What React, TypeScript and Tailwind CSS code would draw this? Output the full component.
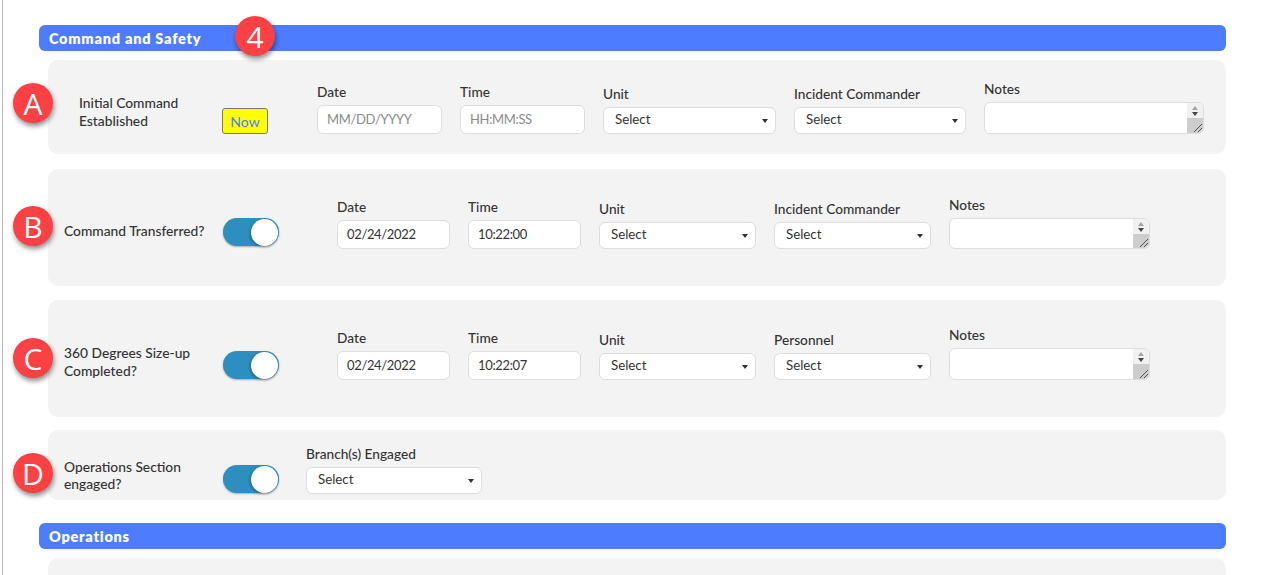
const Badge = ({ text, className }: { text: string; className: string }) => (
  <div
    className={`absolute w-10 h-10 rounded-full bg-[#fb4144] text-white flex items-center justify-center text-[30px] font-['Open_Sans',sans-serif] shadow-[1px_3px_5px_rgba(0,0,0,0.45)] ${className}`}
  >
    {text}
  </div>
);

const SectionHeader = ({ title }: { title: string }) => (
  <div className="h-[26px] rounded-md bg-[#4d7cff] pl-[10px] pt-px flex items-center text-white text-[14.5px] font-extrabold tracking-[0.75px] font-['Lato',sans-serif]">
    {title}
  </div>
);

const Field = ({
  label,
  className,
  gap,
  children,
}: {
  label: string;
  className: string;
  gap: string;
  children: React.ReactNode;
}) => (
  <div className={`shrink-0 ${className}`}>
    <div className={`h-[18px] leading-[18px] text-[13.7px] font-medium text-[#333] ${gap}`}>{label}</div>
    {children}
  </div>
);

const TextBox = ({ value, placeholder, h }: { value?: string; placeholder?: string; h: string }) => (
  <div
    className={`${h} bg-white border border-[#ddd] rounded-md pl-[9px] flex items-center text-[13px] tracking-[-0.35px] ${
      placeholder ? "text-[#8a8a8a]" : "text-[#333]"
    }`}
  >
    {value ?? placeholder}
  </div>
);

const SelectBox = () => (
  <div className="h-[27px] bg-white border border-[#ddd] rounded-md pl-[11px] pr-[7px] flex items-center justify-between text-[13.3px] text-[#333]">
    <span className="-mt-[2px]">Select</span>
    <span className="w-0 h-0 border-x-[3.5px] border-x-transparent border-t-[4px] border-t-[#333]" />
  </div>
);

const NotesBox = ({ h }: { h: string }) => (
  <div className={`${h} bg-white border border-[#ddd] rounded-md flex justify-end overflow-hidden`}>
    <div className="w-[16px] flex flex-col">
      <div className="h-[15px] bg-[#f1f1f1] flex flex-col items-center justify-center gap-[2px]">
        <span className="w-0 h-0 border-x-[3.5px] border-x-transparent border-b-[4px] border-b-[#a3a3a3]" />
        <span className="w-0 h-0 border-x-[3.5px] border-x-transparent border-t-[4px] border-t-[#444]" />
      </div>
      <div className="flex-1 bg-[#cdcdcd] flex items-end justify-end">
        <svg width="12" height="12" viewBox="0 0 12 12" stroke="#555" strokeWidth="1">
          <path d="M3 11 L11 3 M7 11 L11 7" />
        </svg>
      </div>
    </div>
  </div>
);

const Toggle = ({ className }: { className: string }) => (
  <div
    className={`shrink-0 w-14 h-[28px] rounded-full bg-[#2d8fc0] flex items-center justify-end pr-px shadow-[0_1px_2px_rgba(0,0,0,0.3)] ${className}`}
  >
    <div className="w-[27px] h-[27px] rounded-full bg-white shadow-[-1px_1px_3px_rgba(0,0,0,0.3)]" />
  </div>
);

const FieldRow = ({
  top,
  person,
  date,
  time,
  notesGap,
  notesH,
}: {
  top: string;
  person: string;
  date: string;
  time: string;
  notesGap: string;
  notesH: string;
}) => (
  <>
    <Field label="Date" className={`w-[113px] ml-[58px] ${top}`} gap="mb-[4px]">
      <TextBox value={date} h="h-[29px]" />
    </Field>
    <Field label="Time" className={`w-[113px] ml-[18px] ${top}`} gap="mb-[4px]">
      <TextBox value={time} h="h-[29px]" />
    </Field>
    <Field label="Unit" className={`w-[157px] ml-[18px] ${top}`} gap="mt-[2px] mb-[4px]">
      <SelectBox />
    </Field>
    <Field label={person} className={`w-[157px] ml-[18px] ${top}`} gap="mt-[2px] mb-[4px]">
      <SelectBox />
    </Field>
    <Field label="Notes" className={`w-[201px] ml-[18px] ${top}`} gap={notesGap}>
      <NotesBox h={notesH} />
    </Field>
  </>
);

export default function App() {
  return (
    <div className="relative h-[575px] overflow-hidden bg-white font-['Lato',sans-serif]">
      <div className="ml-[2px] h-full border-l border-[#bdbdbd] pl-[36px] pr-[35px] pt-[25px]">
        <SectionHeader title="Command and Safety" />

        <div className="ml-[9px] mt-[9px] h-[94px] bg-[#f3f3f3] rounded-[10px] flex items-start">
          <div className="w-[143px] ml-[31px] mt-[34px] text-[13.8px] leading-[18px] font-medium text-[#333] shrink-0">
            Initial Command
            <br />
            Established
          </div>
          <div className="shrink-0 w-[46px] h-[26px] mt-[48px] bg-[#ffff00] border border-[#777] rounded-[3px] flex items-center justify-center text-[14px] text-[#4d7cff]">
            Now
          </div>
          <Field label="Date" className="w-[125px] ml-[49px] mt-[23px]" gap="mb-[4px]">
            <TextBox placeholder="MM/DD/YYYY" h="h-[29px]" />
          </Field>
          <Field label="Time" className="w-[125px] ml-[18px] mt-[23px]" gap="mb-[4px]">
            <TextBox placeholder="HH:MM:SS" h="h-[29px]" />
          </Field>
          <Field label="Unit" className="w-[173px] ml-[18px] mt-[23px]" gap="mt-[2px] mb-[4px]">
            <SelectBox />
          </Field>
          <Field label="Incident Commander" className="w-[172px] ml-[18px] mt-[23px]" gap="mt-[2px] mb-[4px]">
            <SelectBox />
          </Field>
          <Field label="Notes" className="w-[220px] ml-[18px] mt-[23px]" gap="-mt-[3px] mb-[4px]">
            <NotesBox h="h-[32px]" />
          </Field>
        </div>

        <div className="ml-[9px] mt-[15px] h-[117px] bg-[#f3f3f3] rounded-[10px] flex items-start">
          <div className="w-[159px] ml-4 mt-[53px] text-[13.8px] leading-[18px] font-medium text-[#333] shrink-0">
            Command Transferred?
          </div>
          <Toggle className="mt-[49px]" />
          <FieldRow
            top="mt-[29px]"
            person="Incident Commander"
            date="02/24/2022"
            time="10:22:00"
            notesGap="-mt-[2px] mb-[4px]"
            notesH="h-[31px]"
          />
        </div>

        <div className="ml-[9px] mt-[14px] h-[117px] bg-[#f3f3f3] rounded-[10px] flex items-start">
          <div className="w-[159px] ml-4 mt-[44px] text-[13.8px] leading-[18px] font-medium text-[#333] shrink-0">
            360 Degrees Size-up
            <br />
            Completed?
          </div>
          <Toggle className="mt-[51px]" />
          <FieldRow
            top="mt-[29px]"
            person="Personnel"
            date="02/24/2022"
            time="10:22:07"
            notesGap="-mt-[3px] mb-[4px]"
            notesH="h-[32px]"
          />
        </div>

        <div className="ml-[9px] mt-[13px] h-[70px] bg-[#f3f3f3] rounded-[10px] flex items-start">
          <div className="w-[159px] ml-4 mt-[28px] text-[13.8px] leading-[17px] font-medium text-[#333] shrink-0">
            Operations Section
            <br />
            engaged?
          </div>
          <Toggle className="mt-[35px]" />
          <Field label="Branch(s) Engaged" className="w-[176px] ml-[27px] mt-[15px]" gap="mb-[4px]">
            <SelectBox />
          </Field>
        </div>

        <div className="mt-[23px]">
          <SectionHeader title="Operations" />
        </div>
        <div className="ml-[9px] mt-[9px] h-[60px] bg-[#f3f3f3] rounded-[10px]" />
      </div>

      <Badge text="4" className="left-[235px] top-[16px]" />
      <Badge text="A" className="left-[13px] top-[83px]" />
      <Badge text="B" className="left-[13px] top-[206px]" />
      <Badge text="C" className="left-[13px] top-[338px]" />
      <Badge text="D" className="left-[13px] top-[453px]" />
    </div>
  );
}
